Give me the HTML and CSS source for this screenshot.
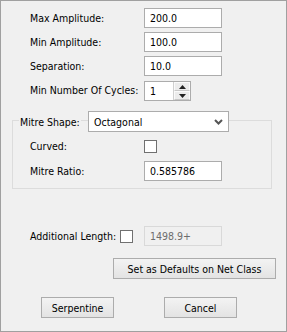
FILE: index.html
```html
<!DOCTYPE html>
<html>
<head>
<meta charset="utf-8">
<link rel="stylesheet" href="styles.css">
</head>
<body>
<div class="window">
  <div class="form">
    <span class="lbl">Max Amplitude:</span><div class="input">200.0</div>
    <span class="lbl">Min Amplitude:</span><div class="input">100.0</div>
    <span class="lbl">Separation:</span><div class="input">10.0</div>
    <span class="lbl">Min Number Of Cycles:</span>
    <div class="spin">
      <span class="spin-val">1</span>
      <div class="spin-btns">
        <div class="spin-btn"><svg width="7" height="4" viewBox="0 0 7 4"><path d="M0 4 L3.5 0 L7 4 Z" fill="#222"/></svg></div>
        <div class="spin-btn"><svg width="7" height="4" viewBox="0 0 7 4"><path d="M0 0 L3.5 4 L7 0 Z" fill="#222"/></svg></div>
      </div>
    </div>
  </div>

  <div class="group">
    <div class="group-title">
      <div class="legend-cell"><span class="legend">Mitre Shape:</span></div>
      <div class="combo">
        <span>Octagonal</span>
        <svg width="9" height="6" viewBox="0 0 9 6"><path d="M1 1 L4.5 4.5 L8 1" fill="none" stroke="#555" stroke-width="2"/></svg>
      </div>
    </div>
    <div class="group-form">
      <span class="lbl">Curved:</span><div class="cell"><span class="check"></span></div>
      <span class="lbl">Mitre Ratio:</span><div class="input">0.585786</div>
    </div>
  </div>

  <div class="addl">
    <div class="addl-left"><span class="lbl">Additional Length:</span><span class="check"></span></div>
    <div class="input disabled">1498.9+</div>
  </div>

  <div class="defaults-row">
    <button class="btn btn-wide">Set as Defaults on Net Class</button>
  </div>

  <div class="actions">
    <button class="btn">Serpentine</button>
    <button class="btn">Cancel</button>
  </div>
</div>
</body>
</html>
```

FILE: styles.css
```css
html, body {
  margin: 0;
  padding: 0;
  background: #f0f0f0;
}

.window {
  box-sizing: border-box;
  width: 287px;
  height: 332px;
  border: 1px solid #a0a0a0;
  background: #f0f0f0;
  font-family: "DejaVu Sans Condensed", "DejaVu Sans", sans-serif;
  font-stretch: condensed;
  font-size: 10.5px;
  color: #000;
}

.form {
  display: grid;
  grid-template-columns: 114px 78px;
  grid-auto-rows: 20px;
  row-gap: 4px;
  padding: 7px 0 0 29px;
}

.lbl {
  align-self: center;
  white-space: nowrap;
}

.input {
  box-sizing: border-box;
  height: 20px;
  width: 78px;
  border: 1px solid #acacac;
  background: #fff;
  padding-left: 5px;
  display: flex;
  align-items: center;
}

.input.disabled {
  border-color: #d9d9d9;
  background: #f0f0f0;
  color: #6d6d6d;
}

.spin {
  box-sizing: border-box;
  width: 47px;
  height: 20px;
  margin-top: 1px;
  border: 1px solid #acacac;
  background: #fff;
  display: flex;
  align-items: stretch;
}

.spin-val {
  flex: 1;
  display: flex;
  align-items: center;
  padding-left: 5px;
}

.spin-btns {
  width: 16px;
  display: flex;
  flex-direction: column;
  border-left: 1px solid #d0d0d0;
}

.spin-btn {
  flex: 1;
  display: flex;
  align-items: center;
  justify-content: center;
  background: #ececec;
  border: 1px solid #fafafa;
  border-bottom-color: #c8c8c8;
}

.group {
  box-sizing: border-box;
  width: 260px;
  margin: 20px 0 0 11px;
  border: 1px solid #dcdcdc;
  padding-bottom: 7px;
}

.group-title {
  display: grid;
  grid-template-columns: 75px 141px;
  height: 21px;
  margin-top: -10px;
}

.legend-cell {
  display: flex;
  align-items: center;
}

.legend {
  margin-left: 6px;
  padding: 0 1px;
  background: #f0f0f0;
  white-space: nowrap;
}

.combo {
  box-sizing: border-box;
  height: 21px;
  border: 1px solid #acacac;
  background: #fff;
  display: flex;
  align-items: center;
  justify-content: space-between;
  padding: 0 5px 0 5px;
}

.group-form {
  display: grid;
  grid-template-columns: 114px 78px;
  grid-template-rows: 20px 20px;
  row-gap: 5px;
  padding-left: 17px;
  margin-top: 4px;
}

.cell {
  display: flex;
  align-items: center;
}

.check {
  box-sizing: border-box;
  display: inline-block;
  width: 13px;
  height: 13px;
  border: 1px solid #707070;
  background: #fff;
}

.addl {
  display: grid;
  grid-template-columns: 114px 78px;
  height: 20px;
  margin-top: 37px;
  padding-left: 29px;
}

.addl-left {
  display: flex;
  align-items: center;
  justify-content: space-between;
  padding-right: 11px;
}

.defaults-row {
  display: flex;
  justify-content: flex-end;
  margin-top: 12px;
  padding-right: 10px;
}

.btn {
  box-sizing: border-box;
  height: 21px;
  width: 73px;
  margin: 0;
  padding: 0;
  border: 1px solid #acacac;
  border-radius: 0;
  background: linear-gradient(#f3f3f3, #e3e3e3);
  font-family: inherit;
  font-stretch: condensed;
  font-size: 10.5px;
  color: #000;
}

.btn-wide {
  width: 163px;
}

.actions {
  display: flex;
  gap: 50px;
  margin-top: 18px;
  padding-left: 40px;
}
```
